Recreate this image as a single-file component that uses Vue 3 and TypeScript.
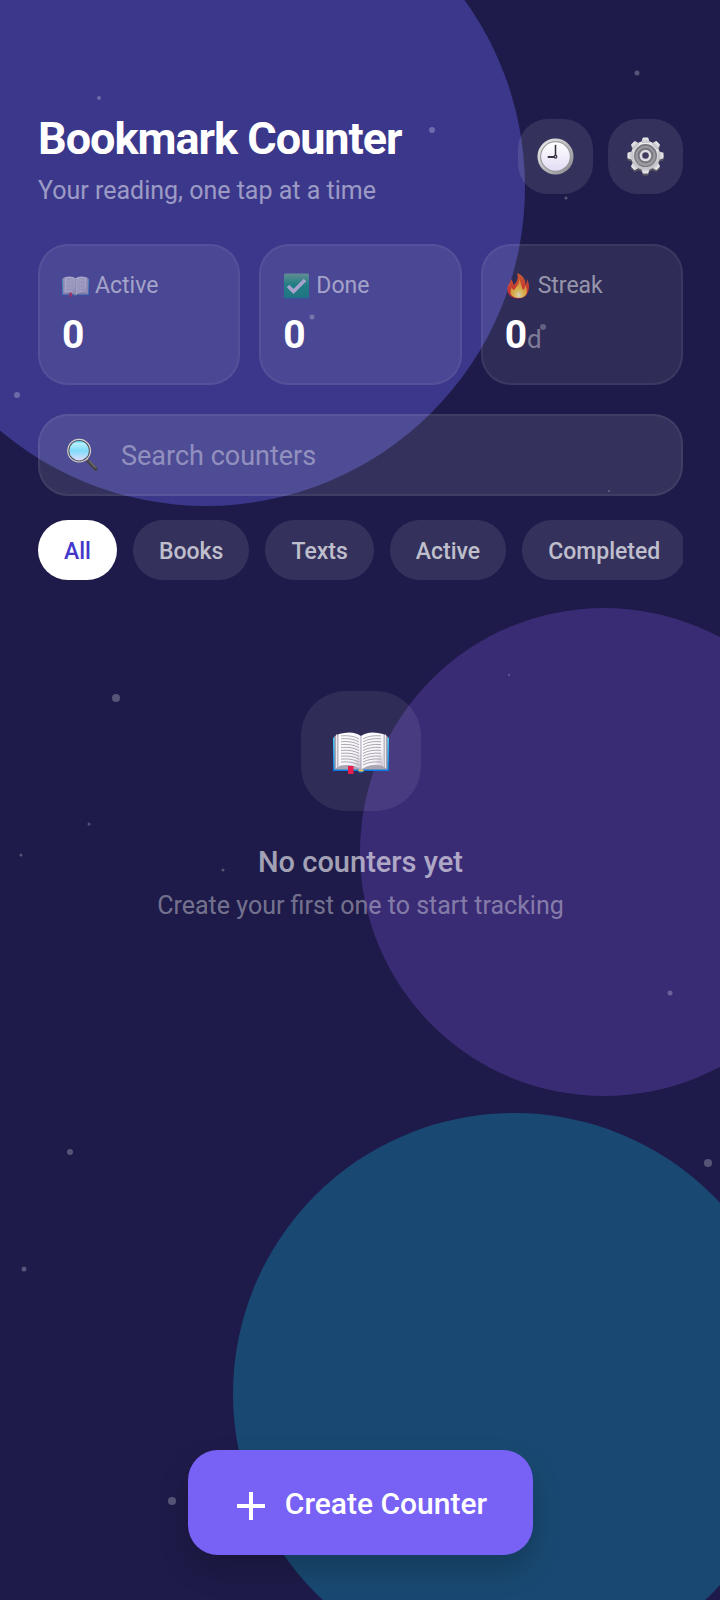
<script setup lang="ts">
import { ref } from 'vue'

interface Star { x: number; y: number; d: number }

const stars: Star[] = [
  { x: 99, y: 98, d: 4 }, { x: 432, y: 130, d: 6 }, { x: 637, y: 73, d: 5 },
  { x: 566, y: 198, d: 3 }, { x: 312, y: 317, d: 5 }, { x: 543, y: 327, d: 6 },
  { x: 17, y: 395, d: 6 }, { x: 609, y: 491, d: 2 }, { x: 509, y: 675, d: 2 },
  { x: 116, y: 698, d: 8 }, { x: 89, y: 824, d: 3 }, { x: 21, y: 855, d: 3 },
  { x: 223, y: 870, d: 3 }, { x: 670, y: 993, d: 5 }, { x: 70, y: 1152, d: 6 },
  { x: 708, y: 1163, d: 8 }, { x: 24, y: 1269, d: 5 }, { x: 172, y: 1501, d: 8 },
]

const filters = ['All', 'Books', 'Texts', 'Active', 'Completed']
const current = ref('All')
const query = ref('')
</script>

<template>
  <div class="app">
    <div class="backdrop" aria-hidden="true">
      <span class="orb indigo"></span>
      <span class="orb violet"></span>
      <span class="orb teal"></span>
    </div>

    <header class="header">
      <div>
        <h1>Bookmark Counter</h1>
        <p class="tagline">Your reading, one tap at a time</p>
      </div>
      <div class="actions">
        <button type="button" class="icon-btn" aria-label="History">
          <svg width="37" height="37" viewBox="0 0 38 38">
            <defs>
              <linearGradient id="rim" x1="0" y1="0" x2="1" y2="1"><stop offset="0" stop-color="#f2f2f0" /><stop offset="1" stop-color="#85858a" /></linearGradient>
              <linearGradient id="dial" x1="0" y1="0" x2="0" y2="1"><stop offset="0" stop-color="#fff" /><stop offset="1" stop-color="#e4dcf5" /></linearGradient>
            </defs>
            <circle cx="19" cy="19" r="18.5" fill="url(#rim)" />
            <circle cx="19" cy="19" r="15.7" fill="#94949b" />
            <circle cx="19" cy="19" r="14.7" fill="url(#dial)" />
            <path d="M19 19V7" stroke="#35333e" stroke-width="1.6" /><path d="M20 19.5H11" stroke="#35333e" stroke-width="2" />
            <circle cx="19" cy="19.3" r="2" fill="#35333e" /><circle cx="19" cy="19.3" r=".7" fill="#ddd" />
          </svg>
        </button>
        <button type="button" class="icon-btn" aria-label="Settings">
          <svg width="37" height="39" viewBox="0 0 38 40">
            <defs>
              <linearGradient id="steel" x1="0" y1="0" x2="0" y2="1"><stop offset="0" stop-color="#efeeef" /><stop offset="1" stop-color="#bebdc4" /></linearGradient>
              <g id="cog"><circle cx="19" cy="19" r="15" />
                <path v-for="n in 8" :key="n" d="M14.500 6L16 1.200Q16.200.5 17 .5H21Q21.800.5 22 1.200L23.500 6Z" :transform="`rotate(${n * 45} 19 19)`" />
              </g>
            </defs>
            <use href="#cog" y="2" fill="#5d5961" />
            <use href="#cog" fill="url(#steel)" />
            <circle cx="19" cy="19" r="11.8" fill="#77767c" />
            <circle cx="19" cy="19.5" r="10.5" fill="#9a99a1" />
            <circle cx="19" cy="19" r="8" fill="#77767e" />
            <circle cx="19" cy="19" r="4.7" fill="#403b5f" stroke="#dedde1" stroke-width="2.600" />
          </svg>
        </button>
      </div>
    </header>

    <section class="stats" aria-label="Statistics">
      <div class="card">
        <div class="label">
          <svg width="27" height="21" viewBox="0 0 56 42"><use href="#book" /></svg>
          <span>Active</span>
        </div>
        <div class="value">0</div>
      </div>
      <div class="card">
        <div class="label">
          <svg width="27" height="26" viewBox="0 0 27 26">
            <defs><linearGradient id="tick" x1="0" y1="0" x2="0" y2="1"><stop offset="0" stop-color="#77c894" /><stop offset=".45" stop-color="#00ad78" /><stop offset=".92" stop-color="#009d76" /><stop offset="1" stop-color="#007fa5" /></linearGradient></defs>
            <rect x="1" y=".5" width="25" height="25" rx="1.5" fill="url(#tick)" />
            <path d="M5 13l5.500 5.500L22 7" fill="none" stroke="#f3efff" stroke-width="3.600" />
          </svg>
          <span>Done</span>
        </div>
        <div class="value">0</div>
      </div>
      <div class="card">
        <div class="label">
          <svg class="fire" width="27" height="26" viewBox="0 0 27 26">
            <defs>
              <linearGradient id="flame" x1="0" y1="0" x2="0" y2="1"><stop offset="0" stop-color="#f36b28" /><stop offset="1" stop-color="#e5202a" /></linearGradient>
              <radialGradient id="core" cx=".5" cy=".85" r=".8"><stop offset="0" stop-color="#fffbd0" /><stop offset=".35" stop-color="#ffd44c" /><stop offset="1" stop-color="#ff8a2c" /></radialGradient>
            </defs>
            <path d="M12 0C19 3 21 8 20.500 12C22 11 22 8 21.500 6C26 11 25 25 14 25.500C4 25.500 1 19 3 13C4 10 6 9 5.500 6C8 8 8 10 8.500 12C12 9 14 5 12 0Z" fill="url(#flame)" />
            <path d="M14 5C16 9 16 13 18 17C20 16 20 14 20 12C24 18 22 25 14 25C5 25 4 19 7 14C7 16 8 17 9 17C12 13 15 10 14 5Z" fill="url(#core)" />
          </svg>
          <span>Streak</span>
        </div>
        <div class="value">0<small>d</small></div>
      </div>
    </section>

    <label class="search">
      <svg width="31" height="34" viewBox="0 0 32 34" aria-hidden="true">
        <defs><linearGradient id="lens" x1="0" y1="0" x2="0" y2="1"><stop offset="0" stop-color="#16b5e8" /><stop offset=".15" stop-color="#b6edfc" /><stop offset=".5" stop-color="#80dcfa" /><stop offset="1" stop-color="#e5dcff" /></linearGradient></defs>
        <path d="M19 20l4 4" stroke="#c9c7c7" stroke-width="2.400" />
        <path d="M22 23.500l7.500 8" stroke="#444249" stroke-width="4" stroke-linecap="round" />
        <path d="M23 23l6.500 7" stroke="#77757a" stroke-width="1.200" />
        <circle cx="12.500" cy="12.500" r="11" fill="url(#lens)" stroke="#4e4d58" stroke-width="1.800" />
        <circle cx="12.500" cy="12.500" r="11.700" fill="none" stroke="#d7d5d2" stroke-width="1.200" />
      </svg>
      <input v-model="query" type="text" placeholder="Search counters" aria-label="Search counters" />
    </label>

    <nav class="chips" aria-label="Filters">
      <button
        v-for="f in filters"
        :key="f"
        type="button"
        class="chip"
        :class="{ on: current === f }"
        :aria-pressed="current === f"
        @click="current = f"
      >{{ f }}</button>
    </nav>

    <main class="empty">
      <div class="tile">
        <svg width="56" height="42" viewBox="0 0 56 42" aria-hidden="true">
          <defs>
            <linearGradient id="cover" x1="0" y1="0" x2="0" y2="1"><stop offset="0" stop-color="#45c7f0" /><stop offset="1" stop-color="#0877df" /></linearGradient>
            <linearGradient id="pageL" x1="0" y1="0" x2="1" y2="1"><stop offset="0" stop-color="#fff" /><stop offset=".7" stop-color="#f5f1fa" /><stop offset="1" stop-color="#c2b9c9" /></linearGradient>
            <g id="book">
              <path d="M0 5.500H56V39H0Z" fill="url(#cover)" />
              <path d="M1.500 4Q14-1 28 4.500Q42-1 54.500 4V37.500H1.500Z" fill="#aaa4b1" />
              <path d="M3.500 2.500V36M5.200 2V35M52.500 2.500V36M50.800 2V35" stroke="#eee9ef" stroke-width="1" />
              <path d="M6 2Q20-2 28 4V38Q20 31 6 34Z" fill="url(#pageL)" />
              <path d="M50 2Q36-2 28 4V38Q36 31 50 34Z" fill="url(#pageL)" />
              <path v-for="n in 10" :key="n" :d="`M8 ${1 + n * 2.9}Q19 ${n * 2.9} 26 ${4 + n * 2.9}M48 ${1 + n * 2.9}Q37 ${n * 2.9} 30 ${4 + n * 2.9}`" fill="none" stroke="#97949b" stroke-width=".8" />
              <path d="M28 4V38" stroke="#aaa2b1" stroke-width="1" />
              <path d="M15 34h5.500v8H15Z" fill="#e61d4d" />
              <path d="M25 38q3 1.500 6 0v2q-3 2-6 0Z" fill="#1261b8" /><path d="M25.500 38q2.500 1.500 5 0" fill="none" stroke="#f4c44e" stroke-width="1.500" />
            </g>
          </defs>
          <use href="#book" />
        </svg>
      </div>
      <h2>No counters yet</h2>
      <p>Create your first one to start tracking</p>
    </main>

    <button type="button" class="create">
      <svg width="28" height="32" viewBox="0 0 28 32" aria-hidden="true"><path d="M14 4V32M0 18H28" stroke="#fff" stroke-width="4" /></svg>
      <span>Create Counter</span>
    </button>

    <svg class="stars" aria-hidden="true">
      <circle v-for="(s, i) in stars" :key="i" :cx="s.x" :cy="s.y" :r="s.d / 2" />
    </svg>
  </div>
</template>

<style>
body { background: #1e1b4a; }
</style>

<style scoped>
.app {
  position: relative;
  box-sizing: border-box;
  display: flex;
  flex-direction: column;
  min-height: 100vh;
  padding: 112px 37px 45px 38px;
  overflow: hidden;
  color: #fff;
  font-family: Roboto, "Noto Sans", sans-serif;
  isolation: isolate;
}
.backdrop { position: absolute; inset: 0; z-index: -1; overflow: hidden; }
.orb { position: absolute; border-radius: 50%; }
.indigo { left: -113px; top: -132px; width: 638px; height: 638px; background: #3b388b; }
.violet { left: 360px; top: 608px; width: 488px; height: 488px; background: #3a2b75; }
.teal { left: 233px; top: 1113px; width: 562px; height: 562px; background: #194972; }
.stars { position: absolute; left: 0; top: 0; width: 100%; height: 100%; pointer-events: none; fill: rgba(255, 255, 255, 0.25); }

h1, h2, p { margin: 0; }
button { border: 0; font: inherit; color: inherit; cursor: pointer; }

.header { display: flex; justify-content: space-between; align-items: flex-start; }
h1 { font-size: 45px; line-height: 54px; font-weight: 700; letter-spacing: -1px; }
.tagline { margin-top: 10px; font-size: 25px; line-height: 30px; color: rgba(255, 255, 255, 0.5); }
.actions { display: flex; gap: 15px; padding-top: 7px; }
.icon-btn {
  display: flex; align-items: center; justify-content: center;
  width: 75px; height: 75px; padding: 0; border-radius: 30px;
  background: rgba(255, 255, 255, 0.1);
}

.stats { display: grid; grid-template-columns: repeat(3, 1fr); gap: 19px; margin-top: 38px; }
.card {
  box-sizing: border-box; height: 141px; padding: 24px 22px 20px;
  border: 2px solid rgba(255, 255, 255, 0.06); border-radius: 30px;
  background: rgba(255, 255, 255, 0.08);
}
.label { display: flex; align-items: center; gap: 6px; height: 32px; font-size: 23px; line-height: 32px; color: rgba(255, 255, 255, 0.5); }
.label svg { opacity: 0.55; }
.label .fire { opacity: 0.8; }
.value { margin-top: 10px; font-size: 39px; line-height: 46px; font-weight: 700; }
.value small { font-size: 26px; font-weight: 400; color: rgba(255, 255, 255, 0.4); }

.search {
  box-sizing: border-box; display: flex; align-items: center; gap: 23px;
  height: 82px; margin-top: 29px; padding: 0 28px 0 27px;
  border: 2px solid rgba(255, 255, 255, 0.06); border-radius: 30px;
  background: rgba(255, 255, 255, 0.1);
}
.search svg { flex: none; }
.search input { flex: 1; min-width: 0; padding: 2px 0 0; border: 0; outline: 0; background: none; color: #fff; font: 27px/36px Roboto, "Noto Sans", sans-serif; }
.search input::placeholder { color: rgba(255, 255, 255, 0.4); opacity: 1; }

.chips { display: flex; gap: 16px; margin-top: 24px; overflow: hidden; }
.chip {
  flex: none; height: 60px; padding: 2px 26px 0; border-radius: 30px;
  font-size: 23px; font-weight: 500; color: rgba(255, 255, 255, 0.7);
  background: rgba(255, 255, 255, 0.1);
}
.chip.on { background: #fff; color: #4338ca; }

.empty { display: flex; flex-direction: column; align-items: center; margin-top: 111px; text-align: center; }
.tile { display: flex; align-items: center; justify-content: center; box-sizing: border-box; width: 120px; height: 120px; padding-top: 4px; border-radius: 45px; background: rgba(255, 255, 255, 0.08); }
h2 { margin-top: 33px; font-size: 29px; line-height: 36px; font-weight: 500; color: rgba(255, 255, 255, 0.6); }
.empty p { margin-top: 11px; font-size: 25px; line-height: 30px; color: rgba(255, 255, 255, 0.4); }

.create {
  display: flex; align-items: center; gap: 20px; align-self: center;
  height: 105px; margin-top: auto; padding: 2px 46px 0 49px; border-radius: 30px;
  background: #7861f5; font-size: 30px; font-weight: 500;
  box-shadow: 0 15px 30px rgba(0, 0, 0, 0.2);
}
</style>
